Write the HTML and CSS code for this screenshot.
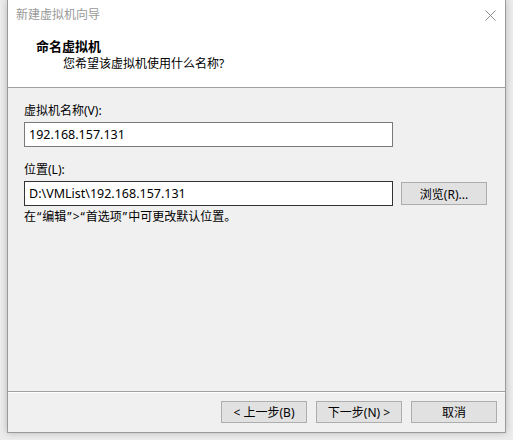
FILE: index.html
```html
<!DOCTYPE html>
<html lang="zh-CN">
<head>
<meta charset="utf-8">
<title>新建虚拟机向导</title>
<link rel="stylesheet" href="styles.css">
</head>
<body>
<div class="window">
  <div class="titlebar">
    <span class="title">新建虚拟机向导</span>
    <svg class="close" width="11" height="11" viewBox="0 0 11 11"><path d="M0.5 0.5 L10.5 10.5 M10.5 0.5 L0.5 10.5" stroke="#8a8a8a" stroke-width="1" fill="none"/></svg>
  </div>
  <div class="header">
    <div class="h-title">命名虚拟机</div>
    <div class="h-sub">您希望该虚拟机使用什么名称?</div>
  </div>
  <div class="content">
    <div class="label">虚拟机名称(V):</div>
    <div class="field field-name">192.168.157.131</div>
    <div class="label label-gap">位置(L):</div>
    <div class="row">
      <div class="field field-loc">D:\VMList\192.168.157.131</div>
      <div class="btn">浏览(R)...</div>
    </div>
    <div class="hint">在<span class="q">“</span>编辑<span class="q">”</span>&gt;<span class="q">“</span>首选项<span class="q">”</span>中可更改默认位置。</div>
  </div>
  <div class="footer">
    <div class="btn">&lt; 上一步(B)</div>
    <div class="btn">下一步(N) &gt;</div>
    <div class="btn">取消</div>
  </div>
</div>
</body>
</html>
```

FILE: styles.css
```css
html, body {
  margin: 0;
  padding: 0;
}
body {
  width: 513px;
  height: 440px;
  background: #ececec;
  font-family: "Noto Sans", "Noto Sans CJK SC", sans-serif;
  font-size: 12px;
  color: #000;
  overflow: hidden;
}
.window {
  margin-left: 7px;
  width: 497px;
  height: 432px;
  border: 1px solid #9a9a9a;
  border-top: none;
  background: #f0f0f0;
  box-shadow: 0 0 7px rgba(0,0,0,0.22);
  display: flex;
  flex-direction: column;
}
.titlebar {
  height: 30px;
  background: #fff;
  display: flex;
  align-items: center;
  justify-content: space-between;
  padding: 0 9px 0 8px;
}
.title {
  color: #999;
  font-size: 12px;
  line-height: 16px;
}
.close {
  display: block;
}
.header {
  background: #fff;
  border-bottom: 1px solid #a0a0a0;
  box-sizing: border-box;
  height: 58px;
  padding-top: 8px;
}
.h-title {
  font-weight: bold;
  font-size: 13px;
  line-height: 16px;
  padding-left: 28px;
}
.h-sub {
  line-height: 16px;
  padding-left: 55px;
  margin-top: 2px;
}
.content {
  height: 304px;
  box-sizing: border-box;
  padding: 15px 0 0 16px;
  border-bottom: 1px solid #a0a0a0;
  box-shadow: 0 1px 0 #fff;
}
.label {
  line-height: 16px;
}
.label-gap {
  margin-top: 15px;
}
.field {
  margin-top: 3px;
  width: 369px;
  height: 25px;
  box-sizing: border-box;
  background: #fff;
  border: 1px solid #7a7a7a;
  padding-left: 4px;
  font-size: 12.5px;
  line-height: 23px;
  white-space: nowrap;
}
.field-loc {
  border-color: #333;
}
.row {
  display: flex;
  align-items: center;
  gap: 8px;
}
.row .btn {
  margin-top: 3px;
  height: 23px;
}
.btn {
  width: 86px;
  height: 22px;
  box-sizing: border-box;
  background: #e1e1e1;
  border: 1px solid #adadad;
  display: flex;
  align-items: center;
  justify-content: center;
  font-size: 12px;
  white-space: nowrap;
}
.hint {
  margin-top: 3px;
  line-height: 16px;
}
.q {
  padding: 0 1px;
}
.footer {
  margin-top: 1px;
  flex: 1;
  display: flex;
  justify-content: flex-end;
  align-items: flex-start;
  gap: 9px;
  padding: 8px 8px 0 0;
}
```
